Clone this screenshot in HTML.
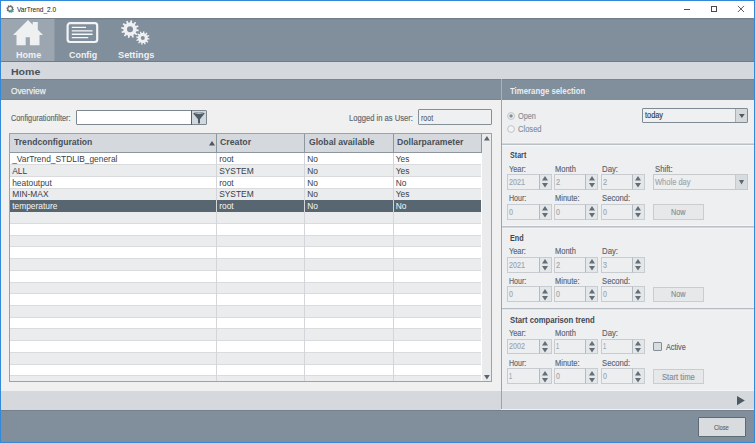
<!DOCTYPE html>
<html><head><meta charset="utf-8"><style>
html,body{margin:0;padding:0;width:755px;height:443px;overflow:hidden;}
body{position:relative;font-family:"Liberation Sans",sans-serif;}
.a{position:absolute;}
.t{white-space:nowrap;}
</style></head><body>
<div class="a" style="left:0.00px;top:0.00px;width:755.00px;height:443.00px;background:#f0f0f0"></div>
<div class="a" style="left:1.00px;top:1.00px;width:753.00px;height:17.00px;background:#fff"></div>
<svg class="a" style="left:6px;top:5px" width="9" height="9" viewBox="0 0 9 9"><path d="M7.20 3.80 L7.88 4.22 L7.65 5.14 L6.86 5.21 L6.29 5.99 L6.48 6.77 L5.66 7.26 L5.06 6.75 L4.10 6.90 L3.68 7.58 L2.76 7.35 L2.69 6.56 L1.91 5.99 L1.13 6.18 L0.64 5.36 L1.15 4.76 L1.00 3.80 L0.32 3.38 L0.55 2.46 L1.34 2.39 L1.91 1.61 L1.72 0.83 L2.54 0.34 L3.14 0.85 L4.10 0.70 L4.52 0.02 L5.44 0.25 L5.51 1.04 L6.29 1.61 L7.07 1.42 L7.56 2.24 L7.05 2.84 Z M5.80 3.80 A1.7 1.7 0 1 0 2.40 3.80 A1.7 1.7 0 1 0 5.80 3.80 Z" fill="#707070" fill-rule="evenodd"/><path d="M4.5 4.6L8.4 6.3L4.5 8.0Z" fill="#30aaa6"/></svg>
<div class="a t" style="left:17.32px;top:6.00px;font-size:8.0px;line-height:8.0px;color:#1e1e1e;font-weight:normal;transform:scaleX(0.8160);transform-origin:0 0;-webkit-text-stroke:0.05px #1e1e1e;">VarTrend_2.0</div>
<div class="a" style="left:684.20px;top:8.60px;width:6.00px;height:0.80px;background:#505050"></div>
<div class="a" style="left:710.60px;top:6.20px;width:6.20px;height:5.60px;border:0.9px solid #484848;box-sizing:border-box"></div>
<svg class="a" style="left:737px;top:5px" width="8" height="8" viewBox="0 0 8 8"><path d="M0.9 0.9L7.0 7.0M7.0 0.9L0.9 7.0" stroke="#404040" stroke-width="0.85"/></svg>
<div class="a" style="left:1.00px;top:18.00px;width:753.00px;height:44.00px;background:#818e9b"></div>
<div class="a" style="left:1.00px;top:18.00px;width:753.00px;height:1.00px;background:#74808b"></div>
<div class="a" style="left:55.00px;top:19.00px;width:699.00px;height:1.00px;background:#7b8893"></div>
<div class="a" style="left:1.00px;top:19.00px;width:54.00px;height:42.00px;background:#9ba6b0"></div>
<div class="a" style="left:54.20px;top:19.00px;width:0.80px;height:42.00px;background:#8e9aa5"></div>
<div class="a" style="left:1.00px;top:61.00px;width:753.00px;height:1.20px;background:#6f7c88"></div>
<svg class="a" style="left:12px;top:19px" width="32" height="28" viewBox="0 0 32 28">
<path d="M16 1 L1 16 H4.5 V26.3 H13.7 V18.3 H17.9 V26.3 H27.5 V16 H31 L25.8 10.8 V3.0 H20.7 V5.8 Z" fill="#eef0f2"/>
</svg>
<div class="a t" style="left:16.24px;top:50.00px;font-size:9.6px;line-height:9.6px;color:#eef1f3;font-weight:bold;transform:scaleX(0.9456);transform-origin:0 0;">Home</div>
<svg class="a" style="left:66px;top:22px" width="33" height="22" viewBox="0 0 33 22">
<rect x="1.6" y="1.2" width="29.6" height="18.8" rx="2.5" fill="none" stroke="#f2f4f5" stroke-width="2.2"/>
<path d="M5.8 5.4H20M5.8 8.9H26.6M5.8 12.2H26.6M5.8 15.6H22.2" stroke="#f7f8f9" stroke-width="1.35"/>
</svg>
<div class="a t" style="left:68.68px;top:50.00px;font-size:9.6px;line-height:9.6px;color:#eef1f3;font-weight:bold;transform:scaleX(0.9299);transform-origin:0 0;">Config</div>
<svg class="a" style="left:110px;top:15px" width="50" height="35" viewBox="0 0 50 35"><path d="M26.60 14.20 L28.88 14.85 L28.64 16.32 L26.28 16.24 L25.72 17.50 L27.36 19.20 L26.42 20.36 L24.42 19.10 L23.30 19.92 L23.87 22.21 L22.48 22.75 L21.37 20.66 L20.00 20.80 L19.35 23.08 L17.88 22.84 L17.96 20.48 L16.70 19.92 L15.00 21.56 L13.84 20.62 L15.10 18.62 L14.28 17.50 L11.99 18.07 L11.45 16.68 L13.54 15.57 L13.40 14.20 L11.12 13.55 L11.36 12.08 L13.72 12.16 L14.28 10.90 L12.64 9.20 L13.58 8.04 L15.58 9.30 L16.70 8.48 L16.13 6.19 L17.52 5.65 L18.63 7.74 L20.00 7.60 L20.65 5.32 L22.12 5.56 L22.04 7.92 L23.30 8.48 L25.00 6.84 L26.16 7.78 L24.90 9.78 L25.72 10.90 L28.01 10.33 L28.55 11.72 L26.46 12.83 Z M23.00 14.20 A3.0 3.0 0 1 0 17.00 14.20 A3.0 3.0 0 1 0 23.00 14.20 Z" fill="#eef0f2" fill-rule="evenodd"/><path d="M37.80 23.00 L39.58 23.50 L39.40 24.62 L37.56 24.55 L37.13 25.50 L38.42 26.82 L37.71 27.71 L36.15 26.72 L35.30 27.33 L35.76 29.12 L34.70 29.53 L33.84 27.89 L32.80 28.00 L32.30 29.78 L31.18 29.60 L31.25 27.76 L30.30 27.33 L28.98 28.62 L28.09 27.91 L29.08 26.35 L28.47 25.50 L26.68 25.96 L26.27 24.90 L27.91 24.04 L27.80 23.00 L26.02 22.50 L26.20 21.38 L28.04 21.45 L28.47 20.50 L27.18 19.18 L27.89 18.29 L29.45 19.28 L30.30 18.67 L29.84 16.88 L30.90 16.47 L31.76 18.11 L32.80 18.00 L33.30 16.22 L34.42 16.40 L34.35 18.24 L35.30 18.67 L36.62 17.38 L37.51 18.09 L36.52 19.65 L37.13 20.50 L38.92 20.04 L39.33 21.10 L37.69 21.96 Z M34.80 23.00 A2.0 2.0 0 1 0 30.80 23.00 A2.0 2.0 0 1 0 34.80 23.00 Z" fill="#eef0f2" fill-rule="evenodd"/></svg>
<div class="a t" style="left:118.08px;top:50.00px;font-size:9.6px;line-height:9.6px;color:#eef1f3;font-weight:bold;transform:scaleX(0.9624);transform-origin:0 0;">Settings</div>
<div class="a" style="left:1.00px;top:62.20px;width:753.00px;height:16.80px;background:#d5d9dd"></div>
<div class="a t" style="left:10.94px;top:67.00px;font-size:9.7px;line-height:9.7px;color:#48535d;font-weight:bold;transform:scaleX(1.0898);transform-origin:0 0;">Home</div>
<div class="a" style="left:1.00px;top:79.00px;width:500.00px;height:21.00px;background:#818e9b"></div>
<div class="a t" style="left:10.96px;top:87.00px;font-size:8.7px;line-height:8.7px;color:#e9edf0;font-weight:normal;transform:scaleX(0.9565);transform-origin:0 0;-webkit-text-stroke:0.25px #e9edf0">Overview</div>
<div class="a" style="left:502.00px;top:79.00px;width:252.00px;height:21.00px;background:#818e9b"></div>
<div class="a" style="left:1.00px;top:79.00px;width:753.00px;height:1.00px;background:#78858f"></div>
<div class="a" style="left:1.00px;top:99.00px;width:500.00px;height:1.00px;background:#7a8792"></div>
<div class="a t" style="left:510.26px;top:87.00px;font-size:8.4px;line-height:8.4px;color:#e9edf0;font-weight:bold;transform:scaleX(0.9309);transform-origin:0 0;">Timerange selection</div>
<div class="a" style="left:501.00px;top:100.00px;width:1.00px;height:309.30px;background:#9aa3ab"></div>
<div class="a" style="left:501.00px;top:79.00px;width:1.00px;height:21.00px;background:#aab2b9"></div>
<div class="a" style="left:502.00px;top:100.00px;width:252.00px;height:290.50px;background:#eeeff1"></div>
<div class="a" style="left:1.00px;top:391.00px;width:500.00px;height:18.50px;background:#d5d9dd"></div>
<div class="a" style="left:502.00px;top:390.30px;width:252.00px;height:19.20px;background:#d5d9dd"></div>
<div class="a" style="left:502.00px;top:390.30px;width:252.00px;height:0.80px;background:#f4f5f6"></div>
<div class="a" style="left:1.00px;top:409.50px;width:753.00px;height:33.50px;background:#818e9b"></div>
<div class="a" style="left:1.00px;top:409.50px;width:753.00px;height:1.00px;background:#74818d"></div>
<div class="a t" style="left:10.98px;top:114.00px;font-size:9.1px;line-height:9.1px;color:#5b646d;font-weight:normal;transform:scaleX(0.8063);transform-origin:0 0;-webkit-text-stroke:0.14px #5b646d;">Configurationfilter:</div>
<div class="a" style="left:76.00px;top:110.00px;width:131.00px;height:15.30px;background:#fff;border:1px solid #7d8790;box-sizing:border-box;border-radius:1px"></div>
<div class="a" style="left:191.50px;top:111.00px;width:14.60px;height:13.40px;background:#d3d8dc"></div>
<div class="a" style="left:191.00px;top:110.30px;width:0.90px;height:14.80px;background:#55626c"></div>
<svg class="a" style="left:192px;top:111px" width="14" height="14" viewBox="0 0 14 14">
<path d="M1.1 2.2 Q7 -0.2 12.8 2.2 L8 8.2 V12.3 Q7 12.9 6 12.3 V8.2 Z" fill="#4d5c66"/>
<ellipse cx="7" cy="2.1" rx="4.3" ry="0.8" fill="#b9c2c8"/>
</svg>
<div class="a t" style="left:348.72px;top:114.00px;font-size:9.1px;line-height:9.1px;color:#5b646d;font-weight:normal;transform:scaleX(0.8381);transform-origin:0 0;-webkit-text-stroke:0.14px #5b646d;">Logged in as User:</div>
<div class="a" style="left:418.30px;top:109.20px;width:74.20px;height:15.60px;background:#eef0f1;border:1px solid #858f98;box-sizing:border-box;border-radius:1px"></div>
<div class="a t" style="left:420.78px;top:114.00px;font-size:8.6px;line-height:8.6px;color:#454a52;font-weight:normal;transform:scaleX(0.8245);transform-origin:0 0;">root</div>
<div class="a" style="left:9.20px;top:133.30px;width:482.80px;height:249.00px;background:#fff;border:1px solid #9aa2aa;box-sizing:border-box"></div>
<div class="a" style="left:10.20px;top:153.00px;width:471.10px;height:11.73px;background:#ffffff"></div>
<div class="a" style="left:10.20px;top:164.73px;width:471.10px;height:11.73px;background:#ebecee"></div>
<div class="a" style="left:10.20px;top:176.46px;width:471.10px;height:11.73px;background:#ffffff"></div>
<div class="a" style="left:10.20px;top:188.19px;width:471.10px;height:11.73px;background:#ebecee"></div>
<div class="a" style="left:10.20px;top:199.92px;width:471.10px;height:11.73px;background:#576670"></div>
<div class="a" style="left:10.20px;top:211.65px;width:471.10px;height:11.73px;background:#ebecee"></div>
<div class="a" style="left:10.20px;top:223.38px;width:471.10px;height:11.73px;background:#ffffff"></div>
<div class="a" style="left:10.20px;top:235.11px;width:471.10px;height:11.73px;background:#ebecee"></div>
<div class="a" style="left:10.20px;top:246.84px;width:471.10px;height:11.73px;background:#ffffff"></div>
<div class="a" style="left:10.20px;top:258.57px;width:471.10px;height:11.73px;background:#ebecee"></div>
<div class="a" style="left:10.20px;top:270.30px;width:471.10px;height:11.73px;background:#ffffff"></div>
<div class="a" style="left:10.20px;top:282.03px;width:471.10px;height:11.73px;background:#ebecee"></div>
<div class="a" style="left:10.20px;top:293.76px;width:471.10px;height:11.73px;background:#ffffff"></div>
<div class="a" style="left:10.20px;top:305.49px;width:471.10px;height:11.73px;background:#ebecee"></div>
<div class="a" style="left:10.20px;top:317.22px;width:471.10px;height:11.73px;background:#ffffff"></div>
<div class="a" style="left:10.20px;top:328.95px;width:471.10px;height:11.73px;background:#ebecee"></div>
<div class="a" style="left:10.20px;top:340.68px;width:471.10px;height:11.73px;background:#ffffff"></div>
<div class="a" style="left:10.20px;top:352.41px;width:471.10px;height:11.73px;background:#ebecee"></div>
<div class="a" style="left:10.20px;top:364.14px;width:471.10px;height:11.73px;background:#ffffff"></div>
<div class="a" style="left:10.20px;top:375.87px;width:471.10px;height:5.13px;background:#ebecee"></div>
<div class="a" style="left:10.20px;top:164.23px;width:471.10px;height:1.00px;background:#d9dbdd"></div>
<div class="a" style="left:10.20px;top:175.96px;width:471.10px;height:1.00px;background:#d9dbdd"></div>
<div class="a" style="left:10.20px;top:187.69px;width:471.10px;height:1.00px;background:#d9dbdd"></div>
<div class="a" style="left:10.20px;top:222.88px;width:471.10px;height:1.00px;background:#d9dbdd"></div>
<div class="a" style="left:10.20px;top:234.61px;width:471.10px;height:1.00px;background:#d9dbdd"></div>
<div class="a" style="left:10.20px;top:246.34px;width:471.10px;height:1.00px;background:#d9dbdd"></div>
<div class="a" style="left:10.20px;top:258.07px;width:471.10px;height:1.00px;background:#d9dbdd"></div>
<div class="a" style="left:10.20px;top:269.80px;width:471.10px;height:1.00px;background:#d9dbdd"></div>
<div class="a" style="left:10.20px;top:281.53px;width:471.10px;height:1.00px;background:#d9dbdd"></div>
<div class="a" style="left:10.20px;top:293.26px;width:471.10px;height:1.00px;background:#d9dbdd"></div>
<div class="a" style="left:10.20px;top:304.99px;width:471.10px;height:1.00px;background:#d9dbdd"></div>
<div class="a" style="left:10.20px;top:316.72px;width:471.10px;height:1.00px;background:#d9dbdd"></div>
<div class="a" style="left:10.20px;top:328.45px;width:471.10px;height:1.00px;background:#d9dbdd"></div>
<div class="a" style="left:10.20px;top:340.18px;width:471.10px;height:1.00px;background:#d9dbdd"></div>
<div class="a" style="left:10.20px;top:351.91px;width:471.10px;height:1.00px;background:#d9dbdd"></div>
<div class="a" style="left:10.20px;top:363.64px;width:471.10px;height:1.00px;background:#d9dbdd"></div>
<div class="a" style="left:10.20px;top:375.37px;width:471.10px;height:1.00px;background:#d9dbdd"></div>
<div class="a t" style="left:12.20px;top:155.00px;font-size:8.4px;line-height:8.4px;color:#3a3f44;font-weight:normal;">_VarTrend_STDLIB_general</div>
<div class="a t" style="left:219.20px;top:155.00px;font-size:8.4px;line-height:8.4px;color:#3a3f44;font-weight:normal;">root</div>
<div class="a t" style="left:307.30px;top:155.00px;font-size:8.4px;line-height:8.4px;color:#3a3f44;font-weight:normal;">No</div>
<div class="a t" style="left:395.70px;top:155.00px;font-size:8.4px;line-height:8.4px;color:#3a3f44;font-weight:normal;">Yes</div>
<div class="a t" style="left:12.20px;top:167.00px;font-size:8.4px;line-height:8.4px;color:#3a3f44;font-weight:normal;">ALL</div>
<div class="a t" style="left:219.20px;top:167.00px;font-size:8.4px;line-height:8.4px;color:#3a3f44;font-weight:normal;">SYSTEM</div>
<div class="a t" style="left:307.30px;top:167.00px;font-size:8.4px;line-height:8.4px;color:#3a3f44;font-weight:normal;">No</div>
<div class="a t" style="left:395.70px;top:167.00px;font-size:8.4px;line-height:8.4px;color:#3a3f44;font-weight:normal;">Yes</div>
<div class="a t" style="left:12.20px;top:179.00px;font-size:8.4px;line-height:8.4px;color:#3a3f44;font-weight:normal;">heatoutput</div>
<div class="a t" style="left:219.20px;top:179.00px;font-size:8.4px;line-height:8.4px;color:#3a3f44;font-weight:normal;">root</div>
<div class="a t" style="left:307.30px;top:179.00px;font-size:8.4px;line-height:8.4px;color:#3a3f44;font-weight:normal;">No</div>
<div class="a t" style="left:395.70px;top:179.00px;font-size:8.4px;line-height:8.4px;color:#3a3f44;font-weight:normal;">No</div>
<div class="a t" style="left:12.20px;top:190.00px;font-size:8.4px;line-height:8.4px;color:#3a3f44;font-weight:normal;">MIN-MAX</div>
<div class="a t" style="left:219.20px;top:190.00px;font-size:8.4px;line-height:8.4px;color:#3a3f44;font-weight:normal;">SYSTEM</div>
<div class="a t" style="left:307.30px;top:190.00px;font-size:8.4px;line-height:8.4px;color:#3a3f44;font-weight:normal;">No</div>
<div class="a t" style="left:395.70px;top:190.00px;font-size:8.4px;line-height:8.4px;color:#3a3f44;font-weight:normal;">Yes</div>
<div class="a t" style="left:12.20px;top:202.00px;font-size:8.4px;line-height:8.4px;color:#f4f6f7;font-weight:normal;">temperature</div>
<div class="a t" style="left:219.20px;top:202.00px;font-size:8.4px;line-height:8.4px;color:#f4f6f7;font-weight:normal;">root</div>
<div class="a t" style="left:307.30px;top:202.00px;font-size:8.4px;line-height:8.4px;color:#f4f6f7;font-weight:normal;">No</div>
<div class="a t" style="left:395.70px;top:202.00px;font-size:8.4px;line-height:8.4px;color:#f4f6f7;font-weight:normal;">No</div>
<div class="a" style="left:216.30px;top:153.00px;width:0.90px;height:228.00px;background:#d3d5d8"></div>
<div class="a" style="left:304.10px;top:153.00px;width:0.90px;height:228.00px;background:#d3d5d8"></div>
<div class="a" style="left:392.90px;top:153.00px;width:0.90px;height:228.00px;background:#d3d5d8"></div>
<div class="a" style="left:10.20px;top:134.30px;width:471.10px;height:18.70px;background:#d5d9dd"></div>
<div class="a" style="left:10.20px;top:151.90px;width:471.10px;height:1.10px;background:#8d979f"></div>
<div class="a" style="left:216.20px;top:134.30px;width:1.20px;height:18.70px;background:#8d979f"></div>
<div class="a" style="left:304.00px;top:134.30px;width:1.20px;height:18.70px;background:#8d979f"></div>
<div class="a" style="left:392.80px;top:134.30px;width:1.20px;height:18.70px;background:#8d979f"></div>
<div class="a" style="left:480.70px;top:134.30px;width:0.90px;height:18.70px;background:#8d979f"></div>
<div class="a t" style="left:14.26px;top:138.00px;font-size:8.9px;line-height:8.9px;color:#46505a;font-weight:bold;transform:scaleX(0.9684);transform-origin:0 0;">Trendconfiguration</div>
<div class="a t" style="left:219.89px;top:138.00px;font-size:8.9px;line-height:8.9px;color:#46505a;font-weight:bold;transform:scaleX(0.9853);transform-origin:0 0;">Creator</div>
<div class="a t" style="left:308.50px;top:138.00px;font-size:8.9px;line-height:8.9px;color:#46505a;font-weight:bold;transform:scaleX(0.9717);transform-origin:0 0;">Global available</div>
<div class="a t" style="left:396.57px;top:138.00px;font-size:8.9px;line-height:8.9px;color:#46505a;font-weight:bold;transform:scaleX(0.9758);transform-origin:0 0;">Dollarparameter</div>
<svg class="a" style="left:209px;top:141px" width="6" height="5" viewBox="0 0 6 5"><path d="M0 4.5L3 0L6 4.5Z" fill="#4b565f"/></svg>
<div class="a" style="left:481.60px;top:134.30px;width:9.40px;height:247.00px;background:#e9ebed"></div>
<svg class="a" style="left:484px;top:136.4px" width="6" height="5" viewBox="0 0 6 5"><path d="M0 4.4L2.9 0L5.8 4.4Z" fill="#5a656e"/></svg>
<svg class="a" style="left:484px;top:375.3px" width="6" height="5" viewBox="0 0 6 5"><path d="M0 0L2.9 4.4L5.8 0Z" fill="#5a656e"/></svg>
<svg class="a" style="left:506px;top:111px" width="10" height="23" viewBox="0 0 10 23"><circle cx="5.05" cy="5.05" r="3.4" fill="#f2f3f4" stroke="#b8bec3" stroke-width="0.9"/><circle cx="5.05" cy="5.05" r="1.75" fill="#858e96"/><circle cx="5.05" cy="18" r="3.4" fill="#f2f3f4" stroke="#b8bec3" stroke-width="0.9"/></svg>
<div class="a t" style="left:518.11px;top:112.00px;font-size:9.1px;line-height:9.1px;color:#858e96;font-weight:normal;transform:scaleX(0.8051);transform-origin:0 0;-webkit-text-stroke:0.14px #858e96;">Open</div>
<div class="a t" style="left:518.26px;top:125.00px;font-size:9.1px;line-height:9.1px;color:#858e96;font-weight:normal;transform:scaleX(0.8321);transform-origin:0 0;-webkit-text-stroke:0.14px #858e96;">Closed</div>
<div class="a" style="left:642.40px;top:107.50px;width:106.00px;height:15.30px;background:#eef0f1;border:1px solid #7f8a93;box-sizing:border-box;border-radius:1px"></div>
<div class="a" style="left:735.10px;top:108.50px;width:12.40px;height:13.60px;background:#d5d9dc;border-left:1px solid #a9b0b6;box-sizing:border-box"></div>
<svg class="a" style="left:739.3px;top:114px" width="6" height="4" viewBox="0 0 6 4"><path d="M0 0H5.7L2.85 3.9Z" fill="#4e5a63"/></svg>
<div class="a t" style="left:645.24px;top:111.00px;font-size:8.6px;line-height:8.6px;color:#333a40;font-weight:normal;transform:scaleX(0.8569);transform-origin:0 0;-webkit-text-stroke:0.15px #333a40;">today</div>
<svg class="a" style="left:502px;top:141px" width="252" height="6"><rect x="0" y="1.50" width="252" height="3.4" fill="#f7f8f9"/><rect x="0" y="2.45" width="252" height="1.5" fill="#b7bdc2"/></svg>
<div class="a t" style="left:509.84px;top:152.00px;font-size:8.2px;line-height:8.2px;color:#3e4852;font-weight:bold;transform:scaleX(0.8722);transform-origin:0 0;">Start</div>
<div class="a t" style="left:509.49px;top:165.00px;font-size:9.1px;line-height:9.1px;color:#5b646d;font-weight:normal;transform:scaleX(0.8093);transform-origin:0 0;-webkit-text-stroke:0.14px #5b646d;">Year:</div>
<div class="a t" style="left:555.43px;top:165.00px;font-size:9.1px;line-height:9.1px;color:#5b646d;font-weight:normal;transform:scaleX(0.8267);transform-origin:0 0;-webkit-text-stroke:0.14px #5b646d;">Month</div>
<div class="a t" style="left:601.81px;top:165.00px;font-size:9.1px;line-height:9.1px;color:#5b646d;font-weight:normal;transform:scaleX(0.8579);transform-origin:0 0;-webkit-text-stroke:0.14px #5b646d;">Day:</div>
<div class="a" style="left:507.20px;top:174.10px;width:44.80px;height:15.80px;background:#eceef0;border:1px solid #c8ccd0;box-sizing:border-box"></div>
<div class="a" style="left:538.80px;top:174.10px;width:13.20px;height:15.80px;background:#e4e7e9;border:1px solid #c8ccd0;border-left-color:#b5babe;box-sizing:border-box"></div>
<svg class="a" style="left:542.10px;top:176.40px" width="6" height="12" viewBox="0 0 6 12"><path d="M0 4.4L3 0L6 4.4Z M0 6.9H6L3 11.4Z" fill="#646e77"/></svg>
<div class="a t" style="left:509.29px;top:178.00px;font-size:8.8px;line-height:8.8px;color:#9ea6ad;font-weight:normal;transform:scaleX(0.8182);transform-origin:0 0;-webkit-text-stroke:0.14px #9ea6ad;">2021</div>
<div class="a" style="left:553.60px;top:174.10px;width:44.80px;height:15.80px;background:#eceef0;border:1px solid #c8ccd0;box-sizing:border-box"></div>
<div class="a" style="left:585.20px;top:174.10px;width:13.20px;height:15.80px;background:#e4e7e9;border:1px solid #c8ccd0;border-left-color:#b5babe;box-sizing:border-box"></div>
<svg class="a" style="left:588.50px;top:176.40px" width="6" height="12" viewBox="0 0 6 12"><path d="M0 4.4L3 0L6 4.4Z M0 6.9H6L3 11.4Z" fill="#646e77"/></svg>
<div class="a t" style="left:555.68px;top:178.00px;font-size:8.8px;line-height:8.8px;color:#9ea6ad;font-weight:normal;transform:scaleX(0.8473);transform-origin:0 0;-webkit-text-stroke:0.14px #9ea6ad;">2</div>
<div class="a" style="left:600.50px;top:174.10px;width:44.80px;height:15.80px;background:#eceef0;border:1px solid #c8ccd0;box-sizing:border-box"></div>
<div class="a" style="left:632.10px;top:174.10px;width:13.20px;height:15.80px;background:#e4e7e9;border:1px solid #c8ccd0;border-left-color:#b5babe;box-sizing:border-box"></div>
<svg class="a" style="left:635.40px;top:176.40px" width="6" height="12" viewBox="0 0 6 12"><path d="M0 4.4L3 0L6 4.4Z M0 6.9H6L3 11.4Z" fill="#646e77"/></svg>
<div class="a t" style="left:602.58px;top:178.00px;font-size:8.8px;line-height:8.8px;color:#9ea6ad;font-weight:normal;transform:scaleX(0.8473);transform-origin:0 0;-webkit-text-stroke:0.14px #9ea6ad;">2</div>
<div class="a t" style="left:509.07px;top:194.00px;font-size:9.1px;line-height:9.1px;color:#5b646d;font-weight:normal;transform:scaleX(0.7784);transform-origin:0 0;-webkit-text-stroke:0.14px #5b646d;">Hour:</div>
<div class="a t" style="left:555.43px;top:194.00px;font-size:9.1px;line-height:9.1px;color:#5b646d;font-weight:normal;transform:scaleX(0.8244);transform-origin:0 0;-webkit-text-stroke:0.14px #5b646d;">Minute:</div>
<div class="a t" style="left:602.10px;top:194.00px;font-size:9.1px;line-height:9.1px;color:#5b646d;font-weight:normal;transform:scaleX(0.8460);transform-origin:0 0;-webkit-text-stroke:0.14px #5b646d;">Second:</div>
<div class="a" style="left:507.20px;top:203.80px;width:44.80px;height:15.80px;background:#eceef0;border:1px solid #c8ccd0;box-sizing:border-box"></div>
<div class="a" style="left:538.80px;top:203.80px;width:13.20px;height:15.80px;background:#e4e7e9;border:1px solid #c8ccd0;border-left-color:#b5babe;box-sizing:border-box"></div>
<svg class="a" style="left:542.10px;top:206.10px" width="6" height="12" viewBox="0 0 6 12"><path d="M0 4.4L3 0L6 4.4Z M0 6.9H6L3 11.4Z" fill="#646e77"/></svg>
<div class="a t" style="left:509.37px;top:208.00px;font-size:8.8px;line-height:8.8px;color:#9ea6ad;font-weight:normal;transform:scaleX(0.8083);transform-origin:0 0;-webkit-text-stroke:0.14px #9ea6ad;">0</div>
<div class="a" style="left:553.60px;top:203.80px;width:44.80px;height:15.80px;background:#eceef0;border:1px solid #c8ccd0;box-sizing:border-box"></div>
<div class="a" style="left:585.20px;top:203.80px;width:13.20px;height:15.80px;background:#e4e7e9;border:1px solid #c8ccd0;border-left-color:#b5babe;box-sizing:border-box"></div>
<svg class="a" style="left:588.50px;top:206.10px" width="6" height="12" viewBox="0 0 6 12"><path d="M0 4.4L3 0L6 4.4Z M0 6.9H6L3 11.4Z" fill="#646e77"/></svg>
<div class="a t" style="left:555.77px;top:208.00px;font-size:8.8px;line-height:8.8px;color:#9ea6ad;font-weight:normal;transform:scaleX(0.8083);transform-origin:0 0;-webkit-text-stroke:0.14px #9ea6ad;">0</div>
<div class="a" style="left:600.50px;top:203.80px;width:44.80px;height:15.80px;background:#eceef0;border:1px solid #c8ccd0;box-sizing:border-box"></div>
<div class="a" style="left:632.10px;top:203.80px;width:13.20px;height:15.80px;background:#e4e7e9;border:1px solid #c8ccd0;border-left-color:#b5babe;box-sizing:border-box"></div>
<svg class="a" style="left:635.40px;top:206.10px" width="6" height="12" viewBox="0 0 6 12"><path d="M0 4.4L3 0L6 4.4Z M0 6.9H6L3 11.4Z" fill="#646e77"/></svg>
<div class="a t" style="left:602.67px;top:208.00px;font-size:8.8px;line-height:8.8px;color:#9ea6ad;font-weight:normal;transform:scaleX(0.8083);transform-origin:0 0;-webkit-text-stroke:0.14px #9ea6ad;">0</div>
<div class="a t" style="left:655.10px;top:165.00px;font-size:9.1px;line-height:9.1px;color:#5b646d;font-weight:normal;transform:scaleX(0.8465);transform-origin:0 0;-webkit-text-stroke:0.14px #5b646d;">Shift:</div>
<div class="a" style="left:653.10px;top:174.30px;width:94.80px;height:15.30px;background:#eceef0;border:1px solid #c6cacd;box-sizing:border-box"></div>
<div class="a" style="left:735.40px;top:174.30px;width:12.50px;height:15.30px;background:#d8dcdf;border:1px solid #c6cacd;box-sizing:border-box"></div>
<svg class="a" style="left:739px;top:180.10px" width="6" height="5" viewBox="0 0 6 5"><path d="M0 0H5.1L2.55 4.4Z" fill="#5d6770"/></svg>
<div class="a t" style="left:655.41px;top:178.00px;font-size:8.6px;line-height:8.6px;color:#9ea6ad;font-weight:normal;transform:scaleX(0.8749);transform-origin:0 0;-webkit-text-stroke:0.14px #9ea6ad;">Whole day</div>
<div class="a" style="left:653.20px;top:204.10px;width:50.60px;height:15.60px;background:#e6e8ea;border:1px solid #c9cdd0;box-sizing:border-box"></div>
<div class="a t" style="left:671.06px;top:208.00px;font-size:9.1px;line-height:9.1px;color:#838c94;font-weight:normal;transform:scaleX(0.7956);transform-origin:0 0;-webkit-text-stroke:0.14px #838c94;">Now</div>
<svg class="a" style="left:502px;top:223px" width="252" height="6"><rect x="0" y="2.10" width="252" height="3.4" fill="#f7f8f9"/><rect x="0" y="3.05" width="252" height="1.5" fill="#b7bdc2"/></svg>
<div class="a t" style="left:509.57px;top:235.00px;font-size:8.2px;line-height:8.2px;color:#3e4852;font-weight:bold;transform:scaleX(0.8820);transform-origin:0 0;">End</div>
<div class="a t" style="left:509.49px;top:247.00px;font-size:9.1px;line-height:9.1px;color:#5b646d;font-weight:normal;transform:scaleX(0.8093);transform-origin:0 0;-webkit-text-stroke:0.14px #5b646d;">Year:</div>
<div class="a t" style="left:555.43px;top:247.00px;font-size:9.1px;line-height:9.1px;color:#5b646d;font-weight:normal;transform:scaleX(0.8267);transform-origin:0 0;-webkit-text-stroke:0.14px #5b646d;">Month</div>
<div class="a t" style="left:601.81px;top:247.00px;font-size:9.1px;line-height:9.1px;color:#5b646d;font-weight:normal;transform:scaleX(0.8579);transform-origin:0 0;-webkit-text-stroke:0.14px #5b646d;">Day:</div>
<div class="a" style="left:507.20px;top:256.90px;width:44.80px;height:15.80px;background:#eceef0;border:1px solid #c8ccd0;box-sizing:border-box"></div>
<div class="a" style="left:538.80px;top:256.90px;width:13.20px;height:15.80px;background:#e4e7e9;border:1px solid #c8ccd0;border-left-color:#b5babe;box-sizing:border-box"></div>
<svg class="a" style="left:542.10px;top:259.20px" width="6" height="12" viewBox="0 0 6 12"><path d="M0 4.4L3 0L6 4.4Z M0 6.9H6L3 11.4Z" fill="#646e77"/></svg>
<div class="a t" style="left:509.29px;top:261.00px;font-size:8.8px;line-height:8.8px;color:#9ea6ad;font-weight:normal;transform:scaleX(0.8182);transform-origin:0 0;-webkit-text-stroke:0.14px #9ea6ad;">2021</div>
<div class="a" style="left:553.60px;top:256.90px;width:44.80px;height:15.80px;background:#eceef0;border:1px solid #c8ccd0;box-sizing:border-box"></div>
<div class="a" style="left:585.20px;top:256.90px;width:13.20px;height:15.80px;background:#e4e7e9;border:1px solid #c8ccd0;border-left-color:#b5babe;box-sizing:border-box"></div>
<svg class="a" style="left:588.50px;top:259.20px" width="6" height="12" viewBox="0 0 6 12"><path d="M0 4.4L3 0L6 4.4Z M0 6.9H6L3 11.4Z" fill="#646e77"/></svg>
<div class="a t" style="left:555.68px;top:261.00px;font-size:8.8px;line-height:8.8px;color:#9ea6ad;font-weight:normal;transform:scaleX(0.8473);transform-origin:0 0;-webkit-text-stroke:0.14px #9ea6ad;">2</div>
<div class="a" style="left:600.50px;top:256.90px;width:44.80px;height:15.80px;background:#eceef0;border:1px solid #c8ccd0;box-sizing:border-box"></div>
<div class="a" style="left:632.10px;top:256.90px;width:13.20px;height:15.80px;background:#e4e7e9;border:1px solid #c8ccd0;border-left-color:#b5babe;box-sizing:border-box"></div>
<svg class="a" style="left:635.40px;top:259.20px" width="6" height="12" viewBox="0 0 6 12"><path d="M0 4.4L3 0L6 4.4Z M0 6.9H6L3 11.4Z" fill="#646e77"/></svg>
<div class="a t" style="left:602.68px;top:261.00px;font-size:8.8px;line-height:8.8px;color:#9ea6ad;font-weight:normal;transform:scaleX(0.8151);transform-origin:0 0;-webkit-text-stroke:0.14px #9ea6ad;">3</div>
<div class="a t" style="left:509.07px;top:277.00px;font-size:9.1px;line-height:9.1px;color:#5b646d;font-weight:normal;transform:scaleX(0.7784);transform-origin:0 0;-webkit-text-stroke:0.14px #5b646d;">Hour:</div>
<div class="a t" style="left:555.43px;top:277.00px;font-size:9.1px;line-height:9.1px;color:#5b646d;font-weight:normal;transform:scaleX(0.8244);transform-origin:0 0;-webkit-text-stroke:0.14px #5b646d;">Minute:</div>
<div class="a t" style="left:602.10px;top:277.00px;font-size:9.1px;line-height:9.1px;color:#5b646d;font-weight:normal;transform:scaleX(0.8460);transform-origin:0 0;-webkit-text-stroke:0.14px #5b646d;">Second:</div>
<div class="a" style="left:507.20px;top:286.20px;width:44.80px;height:15.80px;background:#eceef0;border:1px solid #c8ccd0;box-sizing:border-box"></div>
<div class="a" style="left:538.80px;top:286.20px;width:13.20px;height:15.80px;background:#e4e7e9;border:1px solid #c8ccd0;border-left-color:#b5babe;box-sizing:border-box"></div>
<svg class="a" style="left:542.10px;top:288.50px" width="6" height="12" viewBox="0 0 6 12"><path d="M0 4.4L3 0L6 4.4Z M0 6.9H6L3 11.4Z" fill="#646e77"/></svg>
<div class="a t" style="left:509.37px;top:290.00px;font-size:8.8px;line-height:8.8px;color:#9ea6ad;font-weight:normal;transform:scaleX(0.8083);transform-origin:0 0;-webkit-text-stroke:0.14px #9ea6ad;">0</div>
<div class="a" style="left:553.60px;top:286.20px;width:44.80px;height:15.80px;background:#eceef0;border:1px solid #c8ccd0;box-sizing:border-box"></div>
<div class="a" style="left:585.20px;top:286.20px;width:13.20px;height:15.80px;background:#e4e7e9;border:1px solid #c8ccd0;border-left-color:#b5babe;box-sizing:border-box"></div>
<svg class="a" style="left:588.50px;top:288.50px" width="6" height="12" viewBox="0 0 6 12"><path d="M0 4.4L3 0L6 4.4Z M0 6.9H6L3 11.4Z" fill="#646e77"/></svg>
<div class="a t" style="left:555.77px;top:290.00px;font-size:8.8px;line-height:8.8px;color:#9ea6ad;font-weight:normal;transform:scaleX(0.8083);transform-origin:0 0;-webkit-text-stroke:0.14px #9ea6ad;">0</div>
<div class="a" style="left:600.50px;top:286.20px;width:44.80px;height:15.80px;background:#eceef0;border:1px solid #c8ccd0;box-sizing:border-box"></div>
<div class="a" style="left:632.10px;top:286.20px;width:13.20px;height:15.80px;background:#e4e7e9;border:1px solid #c8ccd0;border-left-color:#b5babe;box-sizing:border-box"></div>
<svg class="a" style="left:635.40px;top:288.50px" width="6" height="12" viewBox="0 0 6 12"><path d="M0 4.4L3 0L6 4.4Z M0 6.9H6L3 11.4Z" fill="#646e77"/></svg>
<div class="a t" style="left:602.67px;top:290.00px;font-size:8.8px;line-height:8.8px;color:#9ea6ad;font-weight:normal;transform:scaleX(0.8083);transform-origin:0 0;-webkit-text-stroke:0.14px #9ea6ad;">0</div>
<div class="a" style="left:653.20px;top:286.50px;width:50.60px;height:15.60px;background:#e6e8ea;border:1px solid #c9cdd0;box-sizing:border-box"></div>
<div class="a t" style="left:671.06px;top:290.00px;font-size:9.1px;line-height:9.1px;color:#838c94;font-weight:normal;transform:scaleX(0.7956);transform-origin:0 0;-webkit-text-stroke:0.14px #838c94;">Now</div>
<svg class="a" style="left:502px;top:305px" width="252" height="6"><rect x="0" y="1.90" width="252" height="3.4" fill="#f7f8f9"/><rect x="0" y="2.85" width="252" height="1.5" fill="#b7bdc2"/></svg>
<div class="a t" style="left:509.83px;top:317.00px;font-size:8.2px;line-height:8.2px;color:#3e4852;font-weight:bold;transform:scaleX(0.9392);transform-origin:0 0;">Start comparison trend</div>
<div class="a t" style="left:509.49px;top:329.00px;font-size:9.1px;line-height:9.1px;color:#5b646d;font-weight:normal;transform:scaleX(0.8093);transform-origin:0 0;-webkit-text-stroke:0.14px #5b646d;">Year:</div>
<div class="a t" style="left:555.43px;top:329.00px;font-size:9.1px;line-height:9.1px;color:#5b646d;font-weight:normal;transform:scaleX(0.8267);transform-origin:0 0;-webkit-text-stroke:0.14px #5b646d;">Month</div>
<div class="a t" style="left:601.81px;top:329.00px;font-size:9.1px;line-height:9.1px;color:#5b646d;font-weight:normal;transform:scaleX(0.8579);transform-origin:0 0;-webkit-text-stroke:0.14px #5b646d;">Day:</div>
<div class="a" style="left:507.20px;top:338.50px;width:44.80px;height:15.80px;background:#eceef0;border:1px solid #c8ccd0;box-sizing:border-box"></div>
<div class="a" style="left:538.80px;top:338.50px;width:13.20px;height:15.80px;background:#e4e7e9;border:1px solid #c8ccd0;border-left-color:#b5babe;box-sizing:border-box"></div>
<svg class="a" style="left:542.10px;top:340.80px" width="6" height="12" viewBox="0 0 6 12"><path d="M0 4.4L3 0L6 4.4Z M0 6.9H6L3 11.4Z" fill="#646e77"/></svg>
<div class="a t" style="left:509.29px;top:342.00px;font-size:8.8px;line-height:8.8px;color:#9ea6ad;font-weight:normal;transform:scaleX(0.8186);transform-origin:0 0;-webkit-text-stroke:0.14px #9ea6ad;">2002</div>
<div class="a" style="left:553.60px;top:338.50px;width:44.80px;height:15.80px;background:#eceef0;border:1px solid #c8ccd0;box-sizing:border-box"></div>
<div class="a" style="left:585.20px;top:338.50px;width:13.20px;height:15.80px;background:#e4e7e9;border:1px solid #c8ccd0;border-left-color:#b5babe;box-sizing:border-box"></div>
<svg class="a" style="left:588.50px;top:340.80px" width="6" height="12" viewBox="0 0 6 12"><path d="M0 4.4L3 0L6 4.4Z M0 6.9H6L3 11.4Z" fill="#646e77"/></svg>
<div class="a t" style="left:555.63px;top:342.00px;font-size:8.8px;line-height:8.8px;color:#9ea6ad;font-weight:normal;transform:scaleX(0.6328);transform-origin:0 0;-webkit-text-stroke:0.14px #9ea6ad;">1</div>
<div class="a" style="left:600.50px;top:338.50px;width:44.80px;height:15.80px;background:#eceef0;border:1px solid #c8ccd0;box-sizing:border-box"></div>
<div class="a" style="left:632.10px;top:338.50px;width:13.20px;height:15.80px;background:#e4e7e9;border:1px solid #c8ccd0;border-left-color:#b5babe;box-sizing:border-box"></div>
<svg class="a" style="left:635.40px;top:340.80px" width="6" height="12" viewBox="0 0 6 12"><path d="M0 4.4L3 0L6 4.4Z M0 6.9H6L3 11.4Z" fill="#646e77"/></svg>
<div class="a t" style="left:602.53px;top:342.00px;font-size:8.8px;line-height:8.8px;color:#9ea6ad;font-weight:normal;transform:scaleX(0.6328);transform-origin:0 0;-webkit-text-stroke:0.14px #9ea6ad;">1</div>
<div class="a t" style="left:509.07px;top:359.00px;font-size:9.1px;line-height:9.1px;color:#5b646d;font-weight:normal;transform:scaleX(0.7784);transform-origin:0 0;-webkit-text-stroke:0.14px #5b646d;">Hour:</div>
<div class="a t" style="left:555.43px;top:359.00px;font-size:9.1px;line-height:9.1px;color:#5b646d;font-weight:normal;transform:scaleX(0.8244);transform-origin:0 0;-webkit-text-stroke:0.14px #5b646d;">Minute:</div>
<div class="a t" style="left:602.10px;top:359.00px;font-size:9.1px;line-height:9.1px;color:#5b646d;font-weight:normal;transform:scaleX(0.8460);transform-origin:0 0;-webkit-text-stroke:0.14px #5b646d;">Second:</div>
<div class="a" style="left:507.20px;top:368.20px;width:44.80px;height:15.80px;background:#eceef0;border:1px solid #c8ccd0;box-sizing:border-box"></div>
<div class="a" style="left:538.80px;top:368.20px;width:13.20px;height:15.80px;background:#e4e7e9;border:1px solid #c8ccd0;border-left-color:#b5babe;box-sizing:border-box"></div>
<svg class="a" style="left:542.10px;top:370.50px" width="6" height="12" viewBox="0 0 6 12"><path d="M0 4.4L3 0L6 4.4Z M0 6.9H6L3 11.4Z" fill="#646e77"/></svg>
<div class="a t" style="left:509.23px;top:372.00px;font-size:8.8px;line-height:8.8px;color:#9ea6ad;font-weight:normal;transform:scaleX(0.6328);transform-origin:0 0;-webkit-text-stroke:0.14px #9ea6ad;">1</div>
<div class="a" style="left:553.60px;top:368.20px;width:44.80px;height:15.80px;background:#eceef0;border:1px solid #c8ccd0;box-sizing:border-box"></div>
<div class="a" style="left:585.20px;top:368.20px;width:13.20px;height:15.80px;background:#e4e7e9;border:1px solid #c8ccd0;border-left-color:#b5babe;box-sizing:border-box"></div>
<svg class="a" style="left:588.50px;top:370.50px" width="6" height="12" viewBox="0 0 6 12"><path d="M0 4.4L3 0L6 4.4Z M0 6.9H6L3 11.4Z" fill="#646e77"/></svg>
<div class="a t" style="left:555.77px;top:372.00px;font-size:8.8px;line-height:8.8px;color:#9ea6ad;font-weight:normal;transform:scaleX(0.8083);transform-origin:0 0;-webkit-text-stroke:0.14px #9ea6ad;">0</div>
<div class="a" style="left:600.50px;top:368.20px;width:44.80px;height:15.80px;background:#eceef0;border:1px solid #c8ccd0;box-sizing:border-box"></div>
<div class="a" style="left:632.10px;top:368.20px;width:13.20px;height:15.80px;background:#e4e7e9;border:1px solid #c8ccd0;border-left-color:#b5babe;box-sizing:border-box"></div>
<svg class="a" style="left:635.40px;top:370.50px" width="6" height="12" viewBox="0 0 6 12"><path d="M0 4.4L3 0L6 4.4Z M0 6.9H6L3 11.4Z" fill="#646e77"/></svg>
<div class="a t" style="left:602.67px;top:372.00px;font-size:8.8px;line-height:8.8px;color:#9ea6ad;font-weight:normal;transform:scaleX(0.8083);transform-origin:0 0;-webkit-text-stroke:0.14px #9ea6ad;">0</div>
<div class="a" style="left:653.30px;top:341.80px;width:9.00px;height:9.00px;background:#d9dde0;border:1px solid #868e95;box-sizing:border-box;border-radius:1px"></div>
<div class="a t" style="left:666.04px;top:343.00px;font-size:9.1px;line-height:9.1px;color:#5b646d;font-weight:normal;transform:scaleX(0.7964);transform-origin:0 0;-webkit-text-stroke:0.14px #5b646d;">Active</div>
<div class="a" style="left:653.20px;top:368.80px;width:50.60px;height:15.00px;background:#e6e8ea;border:1px solid #c9cdd0;box-sizing:border-box"></div>
<div class="a t" style="left:662.00px;top:373.00px;font-size:9.1px;line-height:9.1px;color:#838c94;font-weight:normal;transform:scaleX(0.8421);transform-origin:0 0;-webkit-text-stroke:0.14px #838c94;">Start time</div>
<svg class="a" style="left:737.2px;top:396.1px" width="8" height="10" viewBox="0 0 8 10"><path d="M0 0L7.8 4.6L0 9.2Z" fill="#4b5a65"/></svg>
<div class="a" style="left:697.90px;top:417.40px;width:47.80px;height:19.20px;background:#d9dcdf;border:1px solid #5d6973;box-sizing:border-box;border-radius:1px"></div>
<div class="a t" style="left:714.15px;top:424.00px;font-size:7.0px;line-height:7.0px;color:#5a6570;font-weight:normal;transform:scaleX(0.8298);transform-origin:0 0;-webkit-text-stroke:0.14px #5a6570;">Close</div>
<div class="a" style="left:0.00px;top:0.00px;width:755.00px;height:443.00px;border:1px solid #3388d8;box-sizing:border-box;background:transparent"></div>
</body></html>
